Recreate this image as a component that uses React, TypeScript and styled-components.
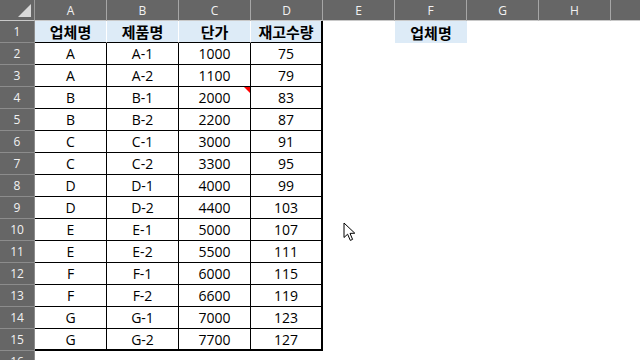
import styled, { createGlobalStyle, css } from "styled-components";

const GlobalStyle = createGlobalStyle`
  html, body {
    margin: 0;
    padding: 0;
    background: #ffffff;
    overflow: hidden;
  }
  body {
    font-family: "Open Sans", "Noto Sans CJK KR", sans-serif;
  }
`;

const columns = ["A", "B", "C", "D", "E", "F", "G", "H", ""];

const rows: [string, string, number, number][] = [
  ["A", "A-1", 1000, 75],
  ["A", "A-2", 1100, 79],
  ["B", "B-1", 2000, 83],
  ["B", "B-2", 2200, 87],
  ["C", "C-1", 3000, 91],
  ["C", "C-2", 3300, 95],
  ["D", "D-1", 4000, 99],
  ["D", "D-2", 4400, 103],
  ["E", "E-1", 5000, 107],
  ["E", "E-2", 5500, 111],
  ["F", "F-1", 6000, 115],
  ["F", "F-2", 6600, 119],
  ["G", "G-1", 7000, 123],
  ["G", "G-2", 7700, 127],
];

const headers = ["업체명", "제품명", "단가", "재고수량"];

export default function App() {
  return (
    <>
      <GlobalStyle />
      <Screen>
        <Sheet>
          <Corner />
          {columns.map((c, i) => (
            <ColHeader key={`col-${i}`} $last={i === columns.length - 1}>
              {c}
            </ColHeader>
          ))}

          <RowHeader>1</RowHeader>
          {headers.map((h, i) => (
            <TitleCell key={h} $edge={i === 3}>
              {h}
            </TitleCell>
          ))}
          <Blank />
          <CriteriaCell>업체명</CriteriaCell>
          <Blank />
          <Blank />
          <Blank />

          {rows.map((r, ri) => {
            const last = ri === rows.length - 1;
            return [
              <RowHeader key={`rh-${ri}`}>{ri + 2}</RowHeader>,
              ...r.map((v, ci) => (
                <DataCell
                  key={`c-${ri}-${ci}`}
                  $edge={ci === 3}
                  $bottom={last}
                  $comment={ri === 2 && ci === 2}
                >
                  {v}
                </DataCell>
              )),
              <Blank key={`e-${ri}`} />,
              <Blank key={`f-${ri}`} />,
              <Blank key={`g-${ri}`} />,
              <Blank key={`h-${ri}`} />,
              <Blank key={`i-${ri}`} />,
            ];
          })}

          <RowHeader>16</RowHeader>
        </Sheet>

        <Cursor width="14" height="20" viewBox="0 0 14 20">
          <path
            d="M1 1 L1 15.5 L4.6 12.2 L7.3 18.4 L9.6 17.4 L7 11.4 L11.8 11.2 Z"
            fill="#ffffff"
            stroke="#000000"
            strokeWidth="1"
            strokeLinejoin="miter"
          />
        </Cursor>
      </Screen>
    </>
  );
}

const Screen = styled.div`
  position: relative;
  width: 640px;
  height: 360px;
  overflow: hidden;
  background: #ffffff;
`;

const Sheet = styled.div`
  display: grid;
  grid-template-columns: 35px repeat(8, 72px) 29px;
  grid-template-rows: 21px repeat(15, 22px) 22px;
`;

const Corner = styled.div`
  position: relative;
  background: #666666;
  border-right: 1px solid #9a9a9a;
  border-bottom: 1px solid #c8c8c8;

  &::after {
    content: "";
    position: absolute;
    right: 3px;
    bottom: 3px;
    width: 0;
    height: 0;
    border-left: 13px solid transparent;
    border-bottom: 13px solid #d9d9d9;
  }
`;

const ColHeader = styled.div<{ $last?: boolean }>`
  display: flex;
  align-items: center;
  justify-content: center;
  background: #666666;
  color: #f2f2f2;
  font-size: 12px;
  border-right: ${(p) => (p.$last ? "none" : "1px solid #a6a6a6")};
  border-bottom: 1px solid #c8c8c8;
  padding-top: 1px;
`;

const RowHeader = styled.div`
  display: flex;
  align-items: center;
  justify-content: center;
  background: #666666;
  color: #f2f2f2;
  font-size: 12px;
  border-bottom: 1px solid #8c8c8c;
  border-right: 1px solid #8c8c8c;
`;

const cellBase = css`
  display: flex;
  align-items: center;
  justify-content: center;
  box-sizing: border-box;
  color: #000000;
`;

const TitleCell = styled.div<{ $edge?: boolean }>`
  ${cellBase};
  background: #ddebf7;
  font-family: "Noto Sans CJK KR", sans-serif;
  font-weight: 700;
  font-size: 15px;
  border-right: ${(p) => (p.$edge ? "2px solid #000000" : "1px solid #ffffff")};
  border-bottom: 1px solid #000000;
`;

const CriteriaCell = styled.div`
  ${cellBase};
  background: #ddebf7;
  font-family: "Noto Sans CJK KR", sans-serif;
  font-weight: 700;
  font-size: 15px;
`;

const DataCell = styled.div<{ $edge?: boolean; $bottom?: boolean; $comment?: boolean }>`
  ${cellBase};
  position: relative;
  font-size: 14px;
  border-right: ${(p) => (p.$edge ? "2px" : "1px")} solid #000000;
  border-bottom: ${(p) => (p.$bottom ? "2px" : "1px")} solid #000000;

  ${(p) =>
    p.$comment &&
    css`
      &::after {
        content: "";
        position: absolute;
        top: 0;
        right: 0;
        width: 0;
        height: 0;
        border-left: 6px solid transparent;
        border-top: 6px solid #ff0000;
      }
    `}
`;

const Blank = styled.div`
  background: #ffffff;
`;

const Cursor = styled.svg`
  position: absolute;
  left: 343px;
  top: 222px;
`;
